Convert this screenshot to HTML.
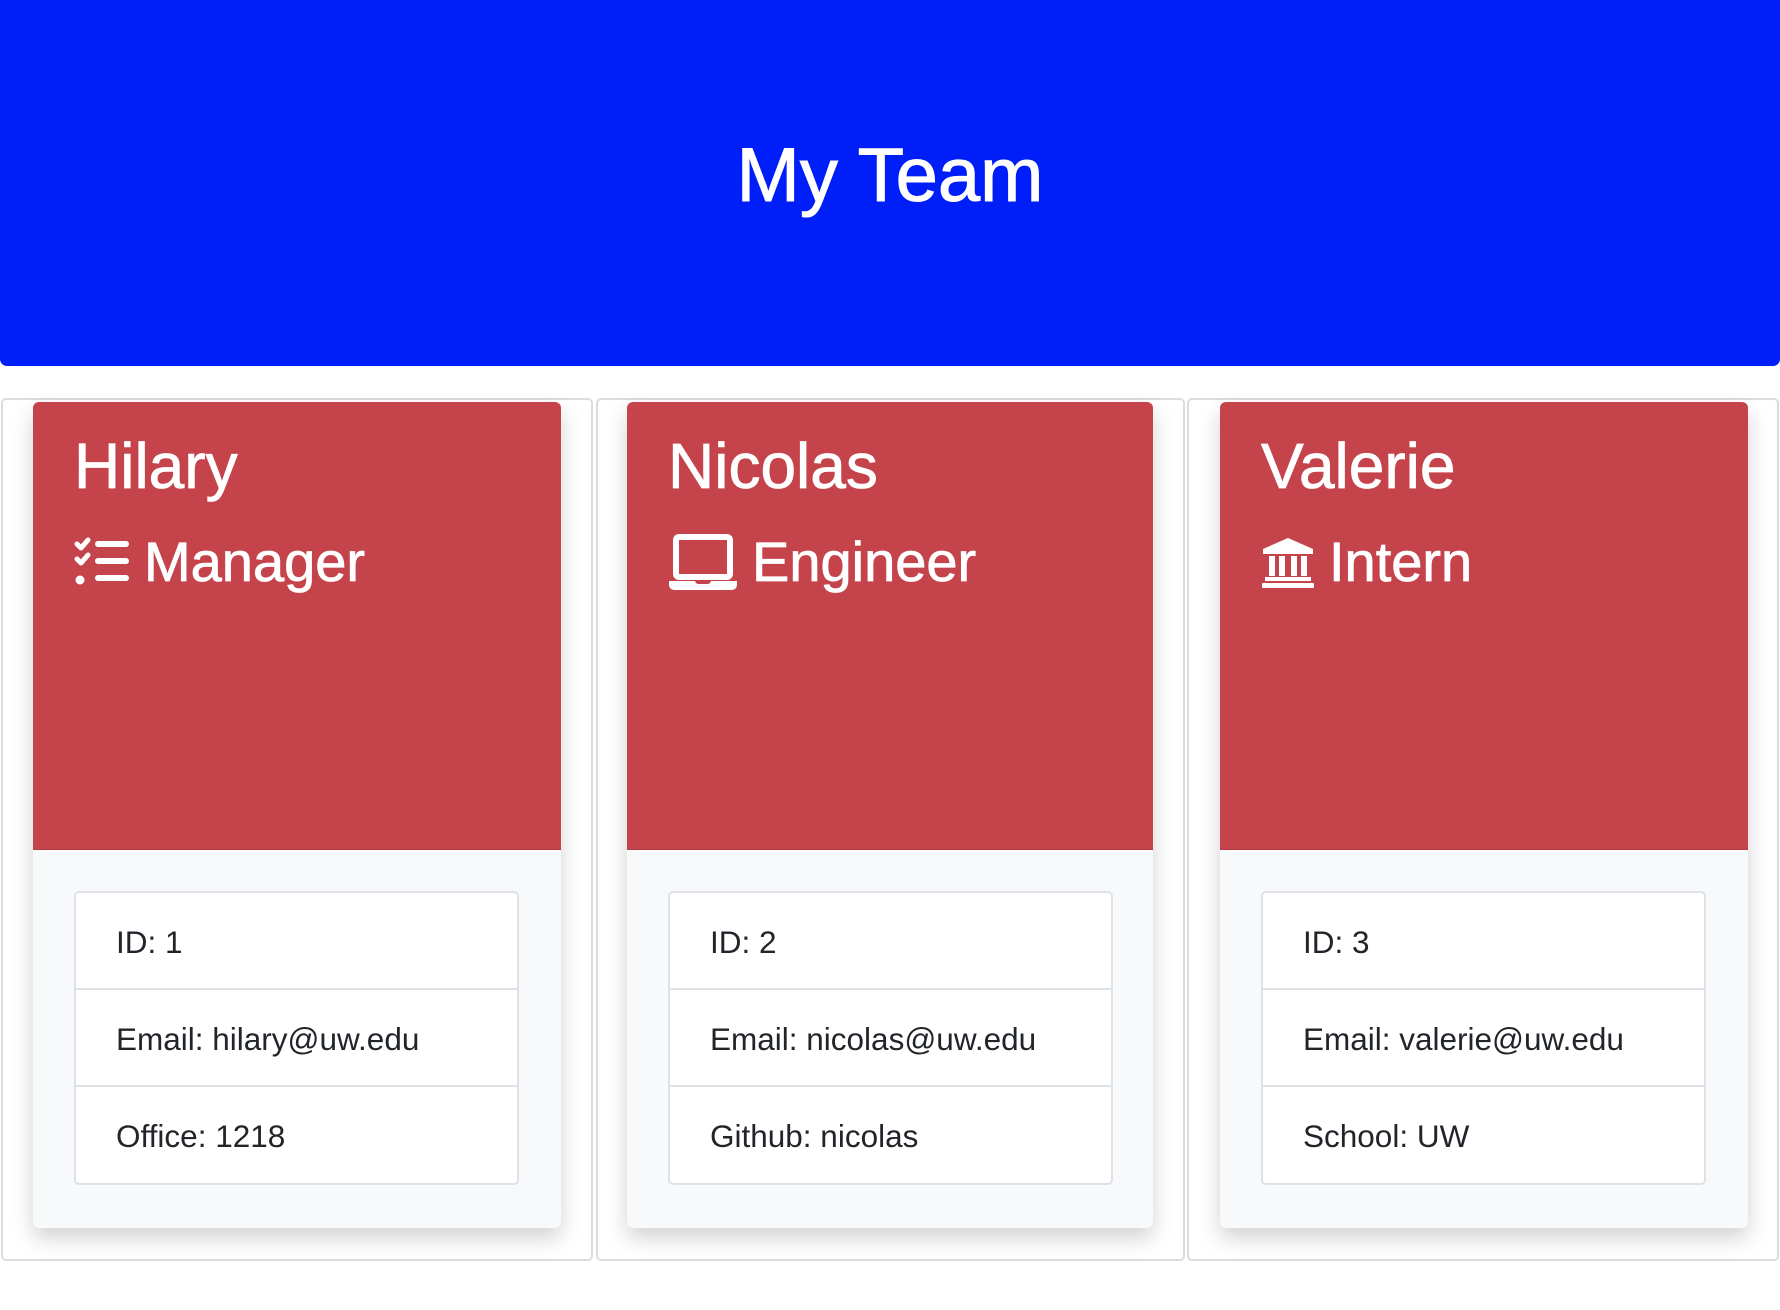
<!DOCTYPE html>
<html><head><meta charset="utf-8"><style>
*{box-sizing:border-box;margin:0;padding:0}
body{width:1780px;height:1310px;background:#fff;font-family:"Liberation Sans",Helvetica,Arial,sans-serif;position:relative;overflow:hidden}
.jumbo{position:absolute;left:0;top:0;width:1780px;height:366px;background:#001ef8;border-radius:0 0 7px 7px}
.jumbo h1{position:absolute;left:0;right:0;top:131px;text-align:center;color:#fff;font-weight:400;font-size:76px;line-height:90px;-webkit-text-stroke:1px #fff}
.col{position:absolute;top:398px;height:863px;border:2px solid #dcdcdc;border-radius:5px}
.card{position:absolute;top:402px;width:528px;height:826px;background:#f8f9fa;border-radius:6px;box-shadow:0 10px 22px rgba(0,0,0,.18);overflow:hidden}
.hd{position:absolute;left:0;top:0;width:100%;height:448px;background:#c5434a;border-bottom:1px solid #b33a40}
.nm{position:absolute;left:41px;top:28px;color:#fff;font-size:64px;line-height:72px;-webkit-text-stroke:0.8px #fff}
.role{position:absolute;left:41px;top:127px;color:#fff;font-size:56px;line-height:66px;white-space:nowrap;-webkit-text-stroke:0.8px #fff}
.role svg{vertical-align:top;margin-right:14px}
.lg{position:absolute;left:41px;top:489px;width:445px;height:294px;background:#fff;border:2px solid #dee2e6;border-radius:5px}
.it{height:97px;border-bottom:2px solid #dee2e6;padding-left:40px;font-size:31.5px;line-height:98px;color:#212529}
.it:last-child{border-bottom:none}
</style></head><body>
<div class="jumbo"><h1>My Team</h1></div>

<div class="col" style="left:1px;width:592px"></div>
<div class="col" style="left:596px;width:589px"></div>
<div class="col" style="left:1187px;width:592px"></div>

<div class="card" style="left:33px">
 <div class="hd">
  <div class="nm">Hilary</div>
  <div class="role"><svg width="56" height="50" viewBox="0 0 56 50" style="margin-top:8px"><g fill="none" stroke="#fff" stroke-width="5" stroke-linecap="round" stroke-linejoin="round"><path d="M3 7l4 4 7-8M3 22l4 4 7-8"/></g><circle cx="6" cy="43" r="4.5" fill="#fff"/><g fill="#fff"><rect x="21" y="4" width="34" height="6" rx="3"/><rect x="21" y="21" width="34" height="6" rx="3"/><rect x="21" y="38" width="34" height="6" rx="3"/></g></svg>Manager</div>
 </div>
 <div class="lg"><div class="it">ID: 1</div><div class="it">Email: hilary@uw.edu</div><div class="it">Office: 1218</div></div>
</div>

<div class="card" style="left:627px;width:526px">
 <div class="hd">
  <div class="nm">Nicolas</div>
  <div class="role"><svg width="70" height="56" viewBox="0 0 70 56" style="margin-top:5px"><rect x="8" y="3" width="54" height="40" rx="3" fill="none" stroke="#fff" stroke-width="6"/><path d="M1 47h26a4 4 0 0 0 4 3h8a4 4 0 0 0 4-3h26v4a5 5 0 0 1-5 5H6a5 5 0 0 1-5-5z" fill="#fff"/></svg>Engineer</div>
 </div>
 <div class="lg"><div class="it">ID: 2</div><div class="it">Email: nicolas@uw.edu</div><div class="it">Github: nicolas</div></div>
</div>

<div class="card" style="left:1220px">
 <div class="hd">
  <div class="nm">Valerie</div>
  <div class="role"><svg width="54" height="50" viewBox="0 0 54 50" style="margin-top:9px"><path d="M27 0L52 11v5H2v-5z" fill="#fff"/><g fill="#fff"><rect x="8" y="18" width="6" height="20"/><rect x="18" y="18" width="6" height="20"/><rect x="30" y="18" width="6" height="20"/><rect x="40" y="18" width="6" height="20"/><rect x="4" y="39" width="46" height="4"/><rect x="1" y="45" width="52" height="5" rx="1"/></g></svg>Intern</div>
 </div>
 <div class="lg"><div class="it">ID: 3</div><div class="it">Email: valerie@uw.edu</div><div class="it">School: UW</div></div>
</div>
</body></html>
